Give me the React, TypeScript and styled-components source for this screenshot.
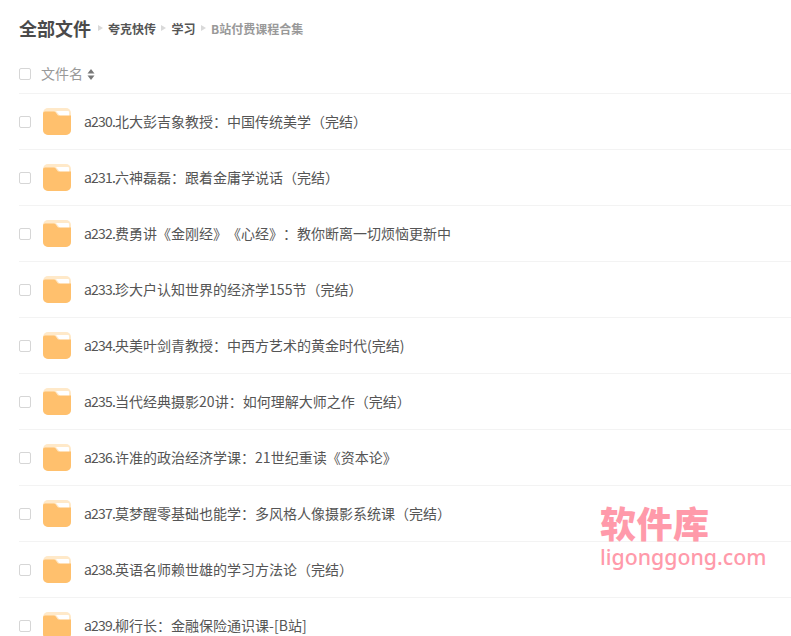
import styled, { createGlobalStyle } from "styled-components";

const files = [
    { code: "a230.", title: "北大彭吉象教授：中国传统美学（完结）" },
    { code: "a231.", title: "六神磊磊：跟着金庸学说话（完结）" },
    { code: "a232.", title: "费勇讲《金刚经》《心经》：教你断离一切烦恼更新中" },
    { code: "a233.", title: "珍大户认知世界的经济学155节（完结）" },
    { code: "a234.", title: "央美叶剑青教授：中西方艺术的黄金时代(完结)" },
    { code: "a235.", title: "当代经典摄影20讲：如何理解大师之作（完结）" },
    { code: "a236.", title: "许准的政治经济学课：21世纪重读《资本论》" },
    { code: "a237.", title: "莫梦醒零基础也能学：多风格人像摄影系统课（完结）" },
    { code: "a238.", title: "英语名师赖世雄的学习方法论（完结）" },
    { code: "a239.", title: "柳行长：金融保险通识课-[B站]" },
];

function FolderIcon() {
    return (
        <svg width="28" height="27" viewBox="0 0 28 27">
            <rect width="28" height="27" rx="5" fill="#ffe9c9" />
            <path d="M13 3H25a1 1 0 0 1 1 1V8H17z" fill="#ffffff" />
            <path
                d="M0 5.500a2 2 0 0 1 2-2H11a2 2 0 0 1 1.500.7L15 7.500H28V22a5 5 0 0 1-5 5H5a5 5 0 0 1-5-5z"
                fill="#ffc06d"
            />
        </svg>
    );
}

function App() {
    return (
        <>
            <GlobalStyle />
            <Page>
                <Breadcrumb>
                    <Title>全部文件</Title>
                    <Arrow />
                    <Crumb>夸克快传</Crumb>
                    <Arrow />
                    <Crumb>学习</Crumb>
                    <Arrow />
                    <Crumb $current>B站付费课程合集</Crumb>
                </Breadcrumb>
                <HeaderRow>
                    <CheckBox />
                    <HeaderLabel>文件名</HeaderLabel>
                    <SortIcon>
                        <svg width="8" height="11" viewBox="0 0 8 11">
                            <path d="M4 0l3.500 4.500H.5z" fill="#777" />
                            <path d="M4 11L.5 6.500h7z" fill="#777" />
                        </svg>
                    </SortIcon>
                </HeaderRow>
                <List>
                    {files.map((file) => (
                        <Row key={file.code}>
                            <CheckBox />
                            <IconCell>
                                <FolderIcon />
                            </IconCell>
                            <FileName>
                                <FileCode>{file.code}</FileCode>
                                {file.title}
                            </FileName>
                        </Row>
                    ))}
                </List>
                <Watermark>
                    <WatermarkTitle>软件库</WatermarkTitle>
                    <WatermarkUrl>ligonggong.com</WatermarkUrl>
                </Watermark>
            </Page>
        </>
    );
}

export default App;

const GlobalStyle = createGlobalStyle`
    html, body {
        margin: 0;
        height: 100%;
        overflow: hidden;
        background: #fff;
        font-family: "Noto Sans CJK SC", "Liberation Sans", sans-serif;
        text-spacing-trim: space-all;
    }
`;

const Page = styled.div`
    position: relative;
    width: 791px;
    height: 636px;
    overflow: hidden;
    padding-left: 19px;
    box-sizing: border-box;
`;

const Breadcrumb = styled.div`
    display: flex;
    align-items: center;
    height: 22px;
    padding-top: 17px;
`;

const Title = styled.div`
    margin-right: 1.5px;
    font-size: 18px;
    font-weight: 700;
    color: #4a4a4a;
`;

const Arrow = styled.span`
    width: 0;
    height: 0;
    margin: 0 5.25px;
    border-left: 5px solid #d9d9d9;
    border-top: 3.5px solid transparent;
    border-bottom: 3.5px solid transparent;
`;

const Crumb = styled.div<{ $current?: boolean }>`
    font-size: 12px;
    font-weight: 700;
    color: ${({ $current }) => ($current ? "#999" : "#555")};
`;

const HeaderRow = styled.div`
    display: flex;
    align-items: center;
    height: 38px;
    padding-top: 16px;
    border-bottom: 1px solid #f3f3f3;
`;

const CheckBox = styled.span`
    flex: none;
    width: 10px;
    height: 10px;
    border: 1px solid #d6d6d6;
    border-radius: 2px;
`;

const HeaderLabel = styled.span`
    margin-left: 10px;
    padding-bottom: 2px;
    font-size: 14px;
    color: #999;
`;

const SortIcon = styled.span`
    display: flex;
    margin-left: 4px;
`;

const List = styled.div`
    display: flex;
    flex-direction: column;
`;

const Row = styled.div`
    display: flex;
    align-items: center;
    flex: none;
    height: 55px;
    border-bottom: 1px solid #f3f3f3;
`;

const IconCell = styled.span`
    display: flex;
    margin-left: 12px;
`;

const FileName = styled.span`
    margin-left: 13px;
    padding-bottom: 2px;
    font-size: 14px;
    color: #555;
`;

const FileCode = styled.span`
    letter-spacing: -0.8px;
`;

const Watermark = styled.div`
    position: absolute;
    left: 600px;
    top: 499px;
    display: flex;
    flex-direction: column;
    color: #ff9aaa;
`;

const WatermarkTitle = styled.div`
    font-size: 36px;
    font-weight: 900;
    line-height: 46px;
    letter-spacing: 0.5px;
`;

const WatermarkUrl = styled.div`
    font-size: 21.3px;
    font-weight: 500;
    line-height: 24px;
    font-family: "Noto Sans", sans-serif;
`;
